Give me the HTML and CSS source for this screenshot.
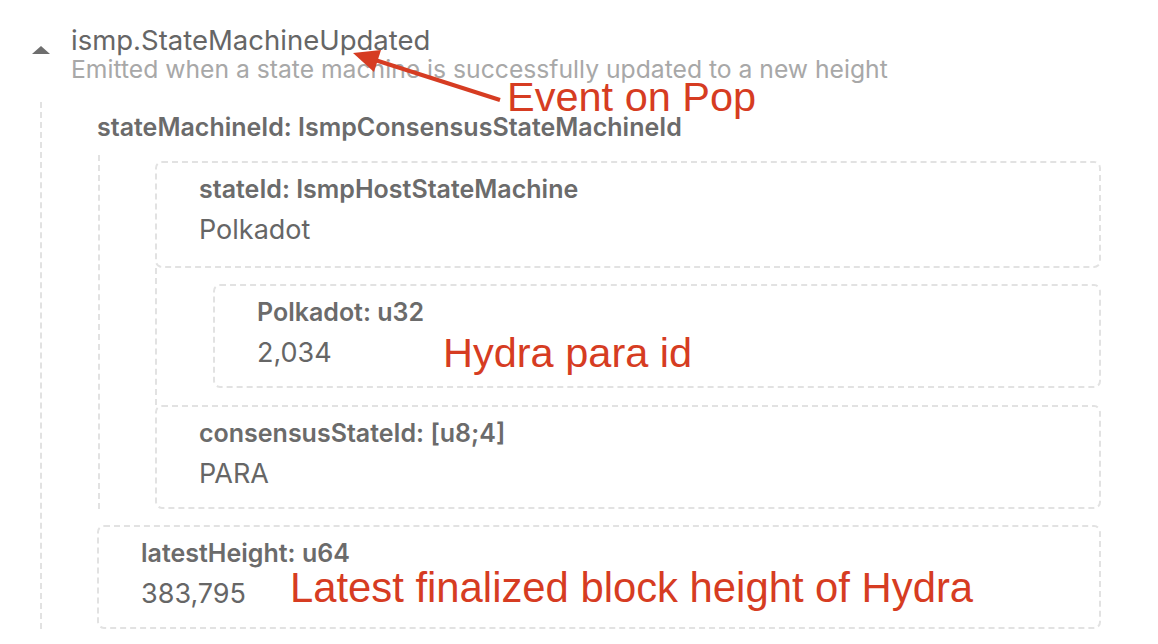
FILE: index.html
```html
<!DOCTYPE html>
<html>
<head>
<meta charset="utf-8">
<link rel="stylesheet" href="styles.css">
</head>
<body>
<div class="page">
  <div class="event">
    <div class="event-head">
      <span class="caret"></span>
      <div class="event-text">
        <div class="event-title">ismp.StateMachineUpdated</div>
        <div class="event-desc">Emitted when a state machine is successfully updated to a new height</div>
      </div>
    </div>
    <div class="args">
      <div class="field-label">stateMachineId: IsmpConsensusStateMachineId</div>
      <div class="children">
        <div class="box box-first">
          <div class="field-label">stateId: IsmpHostStateMachine</div>
          <div class="field-value">Polkadot</div>
        </div>
        <div class="children nested">
          <div class="box">
            <div class="field-label">Polkadot: u32</div>
            <div class="field-value">2,034</div>
          </div>
        </div>
        <div class="box">
          <div class="field-label">consensusStateId: [u8;4]</div>
          <div class="field-value">PARA</div>
        </div>
      </div>
      <div class="box box-last">
        <div class="field-label">latestHeight: u64</div>
        <div class="field-value">383,795</div>
      </div>
    </div>
  </div>

  <svg class="arrow" width="1158" height="644" viewBox="0 0 1158 644">
    <line x1="500" y1="100" x2="372" y2="59" stroke="#d63c22" stroke-width="4" stroke-linecap="butt"/>
    <polygon points="353,53 381,50 374,72" fill="#d63c22"/>
  </svg>
  <div class="note note-event">Event on Pop</div>
  <div class="note note-para">Hydra para id</div>
  <div class="note note-height">Latest finalized block height of Hydra</div>
</div>
</body>
</html>
```

FILE: styles.css
```css
html, body {
  margin: 0;
  padding: 0;
  background: #ffffff;
}

body {
  font-family: Inter, "Noto Sans", sans-serif;
  color: #666666;
}

.page {
  position: relative;
  width: 1101px;
  height: 644px;
  overflow: hidden;
}

.event-head {
  display: flex;
  align-items: flex-start;
  gap: 21px;
  padding: 25px 0 0 32px;
}

.caret {
  width: 0;
  height: 0;
  margin-top: 21px;
  border-left: 9px solid transparent;
  border-right: 9px solid transparent;
  border-bottom: 8px solid #6e6e6e;
}

.event-title {
  font-size: 27.5px;
  line-height: 30px;
  color: #666666;
}

.event-desc {
  font-size: 24.7px;
  line-height: 28px;
  color: #a8a8a8;
}

.args {
  margin: 19px 0 0 40px;
  padding: 10px 0 0 55px;
  border-left: 2px dashed #e2e2e2;
}

.field-label {
  font-size: 25px;
  line-height: 30px;
  font-weight: 600;
  color: #6b6b6b;
}

.args > .field-label {
  margin-bottom: 13px;
}

.children {
  margin-left: 1px;
  padding: 6px 0 0 55px;
  border-left: 2px dashed #e2e2e2;
}

.children.nested {
  margin-left: 0;
  padding: 16px 0 17px 56px;
}

.box {
  border: 2px dashed #e2e2e2;
  border-radius: 7px;
  padding: 11px 42px 17px;
}

.box-first {
  padding-bottom: 20px;
}

.box .field-label {
  margin-bottom: 10px;
}

.field-value {
  font-size: 27px;
  line-height: 32px;
  color: #666666;
}

.box-last {
  margin-top: 16px;
}

.arrow {
  position: absolute;
  left: 0;
  top: 0;
}

.note {
  position: absolute;
  font-family: "Liberation Sans", Arial, sans-serif;
  font-size: 41.5px;
  line-height: 41px;
  color: #d63c22;
  white-space: nowrap;
}

.note-event {
  left: 507px;
  top: 76px;
}

.note-para {
  left: 443px;
  top: 332px;
}

.note-height {
  left: 290px;
  top: 567px;
  font-size: 41.8px;
}
```
